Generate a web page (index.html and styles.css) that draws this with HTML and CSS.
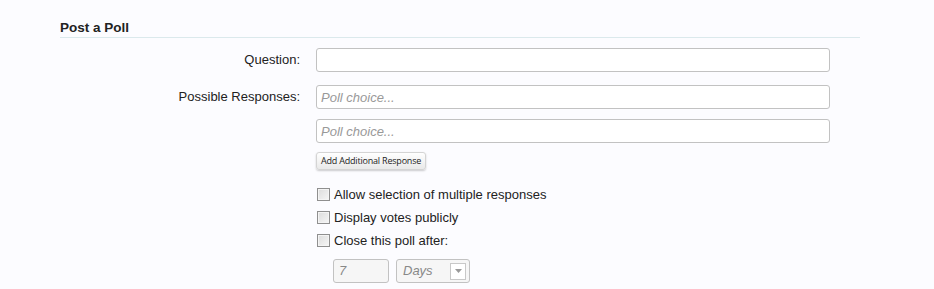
FILE: index.html
```html
<!DOCTYPE html>
<html>
<head>
<meta charset="utf-8">
<link rel="stylesheet" href="styles.css">
</head>
<body>
<div class="page">
  <h3 class="title">Post a Poll</h3>
  <div class="form">
    <div class="row row-q">
      <label class="label">Question:</label>
      <div class="ctrl"><input class="text" type="text"></div>
    </div>
    <div class="row row-r">
      <label class="label">Possible Responses:</label>
      <div class="ctrl">
        <input class="text" type="text" placeholder="Poll choice...">
        <input class="text second" type="text" placeholder="Poll choice...">
        <button class="btn" type="button">Add Additional Response</button>
        <ul class="checks">
          <li><span class="cb"></span>Allow selection of multiple responses</li>
          <li><span class="cb"></span>Display votes publicly</li>
          <li><span class="cb"></span>Close this poll after:</li>
        </ul>
        <div class="after">
          <div class="num">7</div>
          <div class="sel">Days<span class="arrow"><svg width="7" height="4" viewBox="0 0 7 4"><path d="M0 0h7L3.5 4z" fill="#999"/></svg></span></div>
        </div>
      </div>
    </div>
  </div>
</div>
</body>
</html>
```
FILE: styles.css
```css
html, body { margin: 0; padding: 0; background: #fcfcff; }
body { font-family: "Liberation Sans", Arial, sans-serif; font-size: 13px; color: #222; }
.page { width: 800px; padding: 20px 0 0 60px; }
.title { margin: 0; font-size: 13.5px; font-weight: bold; color: #222; line-height: 16px; padding-bottom: 1px; border-bottom: 1px solid #dbe9ec; }
.form { padding-top: 10px; }
.row { display: grid; grid-template-columns: 240px 514px; column-gap: 16px; }
.row-r { margin-top: 13px; }
.label { text-align: right; line-height: 24px; color: #222; }
.ctrl { display: flex; flex-direction: column; align-items: flex-start; }
.text { box-sizing: border-box; width: 514px; height: 24px; margin: 0; border: 1px solid #c2c2c2; border-radius: 3px; background: #fff; padding: 0 4px; font: 13px "Liberation Sans", Arial, sans-serif; }
.text::placeholder { color: #999; font-style: italic; }
.second { margin-top: 10px; }
.btn { margin-top: 9px; height: 18px; padding: 0 4px; border: 1px solid #d4d4d4; border-radius: 3px; background: linear-gradient(#ffffff, #e9e9e9); box-shadow: 0 1px 2px rgba(0,0,0,0.2); font: 9px "Open Sans", sans-serif; letter-spacing: -0.2px; color: #222; line-height: 16px; white-space: nowrap; }
.checks { list-style: none; margin: 13px 0 0 0; padding: 0; }
.checks li { display: flex; align-items: center; height: 23px; line-height: 23px; }
.cb { box-sizing: border-box; width: 13px; height: 13px; margin: 0 4px 0 1px; border: 1px solid #8f8f8f; background: linear-gradient(135deg, #dcdcdc, #f6f6f6); box-shadow: inset 0 0 0 1px #f4f4f4; }
.after { display: flex; gap: 7px; margin: 7px 0 0 17px; }
.num, .sel { box-sizing: border-box; height: 24px; border: 1px solid #c2c2c2; border-radius: 3px; background: #f6f6f6; color: #888; line-height: 22px; font-size: 13px; }
.num { width: 56px; padding-left: 5px; font-style: italic; }
.sel { width: 74px; padding-left: 6px; font-style: italic; display: flex; align-items: center; justify-content: space-between; padding-right: 3px; }
.arrow { box-sizing: border-box; width: 16px; height: 17px; border: 1px solid #c8c8c8; background: #fff; display: flex; align-items: center; justify-content: center; }
```
